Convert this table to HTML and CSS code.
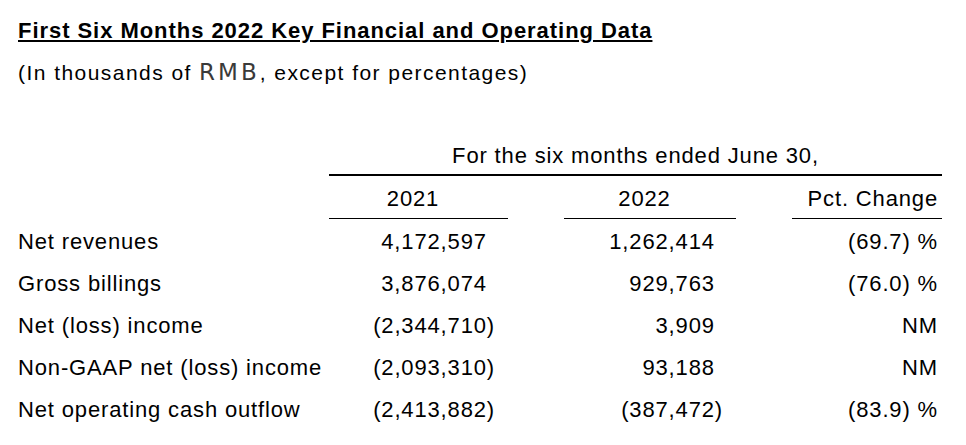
FILE: index.html
```html
<!DOCTYPE html>
<html lang="en">
<head>
<meta charset="utf-8">
<title>First Six Months 2022 Key Financial and Operating Data</title>
<link rel="stylesheet" href="styles.css">
</head>
<body>
<div class="page">
  <h1 class="title">First Six Months 2022 Key Financial and Operating Data</h1>
  <p class="sub">(In thousands of <span class="rmb">RMB</span>, except for percentages)</p>

  <div class="grid">
    <div class="blank"></div>
    <div class="period">For the six months ended June 30,</div>

    <div class="blank"></div>
    <div class="colhead c1">2021</div>
    <div class="gap"></div>
    <div class="colhead c2">2022</div>
    <div class="gap"></div>
    <div class="colhead c3">Pct. Change</div>

    <div class="label first">Net revenues</div>
    <div class="num first">4,172,597<span class="pad">)</span></div>
    <div class="gap first"></div>
    <div class="num first">1,262,414<span class="pad">)</span></div>
    <div class="gap first"></div>
    <div class="pct first">(69.7) %</div>

    <div class="label">Gross billings</div>
    <div class="num">3,876,074<span class="pad">)</span></div>
    <div class="gap"></div>
    <div class="num">929,763<span class="pad">)</span></div>
    <div class="gap"></div>
    <div class="pct">(76.0) %</div>

    <div class="label">Net (loss) income</div>
    <div class="num">(2,344,710)</div>
    <div class="gap"></div>
    <div class="num">3,909<span class="pad">)</span></div>
    <div class="gap"></div>
    <div class="pct">NM</div>

    <div class="label">Non-GAAP net (loss) income</div>
    <div class="num">(2,093,310)</div>
    <div class="gap"></div>
    <div class="num">93,188<span class="pad">)</span></div>
    <div class="gap"></div>
    <div class="pct">NM</div>

    <div class="label">Net operating cash outflow</div>
    <div class="num">(2,413,882)</div>
    <div class="gap"></div>
    <div class="num">(387,472)</div>
    <div class="gap"></div>
    <div class="pct">(83.9) %</div>
  </div>
</div>
</body>
</html>
```

FILE: styles.css
```css
html, body {
  margin: 0;
  padding: 0;
  background: #ffffff;
}

body {
  font-family: "Liberation Sans", Arial, sans-serif;
  color: #000000;
}

.page {
  padding: 19px 18px 0 18px;
}

.title {
  margin: 0;
  font-size: 22px;
  line-height: 24px;
  font-weight: bold;
  letter-spacing: 0.95px;
  text-decoration: underline;
  text-decoration-thickness: 2px;
  text-underline-offset: 2px;
}

.sub {
  margin: 14px 0 0 0;
  font-size: 21px;
  line-height: 30px;
  letter-spacing: 1.45px;
}

.rmb {
  font-family: "DejaVu Sans", "Open Sans", sans-serif;
  font-size: 23px;
  color: #3a3a3a;
  letter-spacing: 3px;
}

.grid {
  margin-top: 52px;
  display: grid;
  grid-template-columns: 311px 179px 56px 172px 56px 150px;
  font-size: 22px;
  letter-spacing: 0.85px;
}

.period {
  grid-column: 2 / 7;
  text-align: center;
  line-height: 30px;
  padding-top: 1px;
  padding-bottom: 3px;
  border-bottom: 2px solid #000;
}

.colhead {
  line-height: 30px;
  padding-top: 8px;
  padding-bottom: 4px;
  border-bottom: 1px solid #000;
}

.c1, .c2 {
  text-align: center;
  padding-right: 11px;
}

.c3 {
  text-align: right;
  padding-right: 4px;
}

.label, .num, .pct, .gap {
  line-height: 42px;
}

.first {
  margin-top: 2px;
}

.num {
  text-align: right;
  padding-right: 13px;
}

.pad {
  visibility: hidden;
}

.pct {
  text-align: right;
  padding-right: 4px;
}
```
